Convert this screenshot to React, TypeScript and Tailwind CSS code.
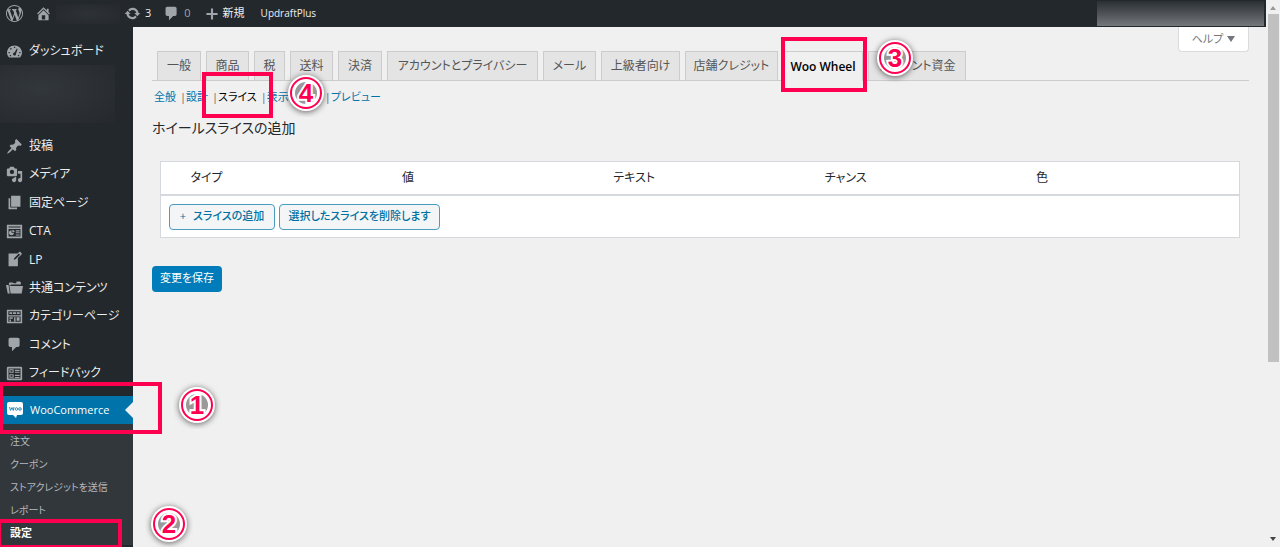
import React from "react";

const icons = {
  wordpress:
    "M20 10c0-5.51-4.49-10-10-10C4.48 0 0 4.49 0 10c0 5.52 4.48 10 10 10 5.51 0 10-4.48 10-10zM7.78 15.37L4.37 6.22c.55-.02 1.17-.08 1.17-.08.5-.06.44-1.13-.06-1.11 0 0-1.45.11-2.37.11-.18 0-.37 0-.58-.01C4.12 2.69 6.87 1.11 10 1.11c2.33 0 4.45.87 6.05 2.34-.68-.11-1.65.39-1.65 1.58 0 .74.45 1.36.9 2.1.35.61.55 1.36.55 2.46 0 1.49-1.4 5-1.4 5l-3.03-8.37c.54-.02.82-.17.82-.17.5-.05.44-1.25-.06-1.22 0 0-1.44.12-2.38.12-.87 0-2.33-.12-2.33-.12-.5-.03-.56 1.2-.06 1.22l.92.08 1.26 3.41zM17.41 10c.24-.64.74-1.87.43-4.25.7 1.29 1.05 2.71 1.05 4.25 0 3.29-1.73 6.24-4.4 7.78.97-2.59 1.94-5.2 2.92-7.78zM6.1 18.09C3.12 16.65 1.11 13.53 1.11 10c0-1.3.23-2.48.72-3.59C3.25 10.3 4.67 14.2 6.1 18.09zm4.03-6.63l2.58 6.98c-.86.29-1.76.45-2.71.45-.79 0-1.57-.11-2.29-.33.81-2.38 1.62-4.74 2.42-7.1z",
  home: "M16 8.5l1.53 1.53-1.06 1.06L10 4.6l-6.47 6.49-1.06-1.06L10 2.5l4 4v-2h2v4zm-6-2.46l6 5.99V18H4v-5.97zM12 17v-5H8v5h4z",
  update:
    "M10.2 3.28c3.53 0 6.43 2.61 6.92 6h2.08l-3.5 4-3.5-4h2.32c-.45-1.97-2.21-3.45-4.32-3.45-1.45 0-2.73.71-3.54 1.78L4.95 5.66C6.23 4.2 8.11 3.28 10.2 3.28zm-.4 13.44c-3.52 0-6.43-2.61-6.92-6H.8l3.5-4c1.17 1.33 2.33 2.67 3.5 4H5.48c.45 1.97 2.21 3.45 4.32 3.45 1.45 0 2.73-.71 3.54-1.78l1.71 1.95c-1.28 1.46-3.15 2.38-5.25 2.38z",
  comment:
    "M5 2h9c1.1 0 2 .9 2 2v7c0 1.1-.9 2-2 2h-2l-5 5v-5H5c-1.1 0-2-.9-2-2V4c0-1.1.9-2 2-2z",
  plus: "M18 8.5v3h-6.5V18h-3v-6.5H2v-3h6.5V2h3v6.5z",
  dashboard:
    "M3.8 17h12.4c1.7-1.4 2.6-3.4 2.6-5.5C18.8 6.8 14.9 3 10 3s-8.8 3.8-8.8 8.5c0 2.1.9 4.1 2.6 5.5zM9.3 4.3h1.5v1.5H9.3zM5 6h1.5v1.5H5zM3 10.5h1.5V12H3zM15.5 10.5H17V12h-1.5zM4.5 14H6v1.5H4.5zM14 14h1.5v1.5H14zM12.8 6.5l.9.5-1.9 5.5c.2 1.2-.6 2.3-1.8 2.3-1 0-1.8-.8-1.8-1.8s.8-1.7 1.8-1.8z",
  pin: "M10.44 3.02l1.82-1.82 6.36 6.35-1.83 1.82c-1.05-.68-2.48-.57-3.41.36l-.75.75c-.92.93-1.04 2.35-.35 3.41l-1.83 1.82-2.41-2.41-2.8 2.79c-.42.42-3.38 2.71-3.8 2.29s1.86-3.39 2.28-3.81l2.79-2.79L4.1 9.36l1.83-1.82c1.05.69 2.48.57 3.4-.36l.75-.75c.93-.92 1.05-2.35.36-3.41z",
  media:
    "M13 11V4c0-.55-.45-1-1-1h-1.67L9 1H5L3.67 3H2c-.55 0-1 .45-1 1v7c0 .55.45 1 1 1h10c.55 0 1-.45 1-1zM7 4.5c1.38 0 2.5 1.12 2.5 2.5S8.38 9.5 7 9.5 4.5 8.38 4.5 7 5.62 4.5 7 4.5zM14 6h5v10.5c0 1.38-1.12 2.5-2.5 2.5S14 17.88 14 16.5s1.12-2.5 2.5-2.5c.17 0 .34.02.5.05V9h-3V6zm-4 8.05V13h2v3.5c0 1.38-1.12 2.5-2.5 2.5S7 17.88 7 16.5 8.12 14 9.5 14c.17 0 .34.02.5.05z",
  pages: "M6 15V2h11v13H6zm-1 1h8v2H3V5h2v11z",
  card: "M1 2h18v16H1zM3 4v1.2h14V4zM3 7v9h14V7zM6.5 8.5v3h3c0 1.7-1.3 3-3 3s-3-1.3-3-3 1.3-3 3-3zM7.5 7.8c1.5 0 2.7 1.2 2.7 2.7H7.5zM11.5 8.5H16V10h-4.5zM11.5 11H16v1.2h-4.5zM11.5 13.5H16v1.2h-4.5z",
  write:
    "M16.89 1.2l1.41 1.41c.39.39.39 1.02 0 1.41L14 8.33V18H3V3h10.67l1.8-1.8c.4-.39 1.03-.4 1.42 0zm-5.66 8.48l5.37-5.36-1.42-1.42-5.36 5.37-.71 2.12z",
  folder:
    "M0 7h3l1.5 10H2zM4 7.5L3.2 5.5 4 4h4l1 1h3l.5-2h4l1 1v2.5H5.5V7.5zM4 8.2h16L18.5 17H5.5z",
  layout:
    "M1 2h18v16H1zM2.8 3.8v4.7h14.4V3.8zM2.8 10v6.2h14.4V10zM4 5h3.3v2H4zM8.3 5h3.4v2H8.3zM12.7 5H16v2h-3.3zM4 11h4v1.5H4zM4 13.5h1.8V16H4zM9.5 11h1.7v5H9.5zM12.5 11H16v4h-3.5z",
  feedback:
    "M2 2h16l1 1v14l-1 1H2l-1-1V3zM3 4v12h14V4zM4 5h5v4H4zM5.2 6.2v1.6h2.6V6.2zM4 11h5v4H4zM5.2 12.2v1.6h2.6v-1.6zM10.5 5.5H16V7h-5.5zM10.5 8H16v1.2h-5.5zM10.5 11.5H16V13h-5.5zM10.5 14H16v1.2h-5.5z",
};

type IconName = keyof typeof icons;

const Icon = ({ name, className }: { name: IconName; className: string }) => (
  <svg viewBox="0 0 20 20" fill="currentColor" fillRule="evenodd" className={className} aria-hidden="true">
    <path d={icons[name]} />
  </svg>
);

const menu: { icon: IconName; label: string }[] = [
  { icon: "pin", label: "投稿" },
  { icon: "media", label: "メディア" },
  { icon: "pages", label: "固定ページ" },
  { icon: "card", label: "CTA" },
  { icon: "write", label: "LP" },
  { icon: "folder", label: "共通コンテンツ" },
  { icon: "layout", label: "カテゴリーページ" },
  { icon: "comment", label: "コメント" },
  { icon: "feedback", label: "フィードバック" },
];

const submenu = ["注文", "クーポン", "ストアクレジットを送信", "レポート", "設定"];

const tabs = [
  { label: "一般", width: "w-11" },
  { label: "商品", width: "w-[43px]" },
  { label: "税", width: "w-[31px]" },
  { label: "送料", width: "w-[43px]" },
  { label: "決済", width: "w-11" },
  { label: "アカウントとプライバシー", width: "w-[151px]" },
  { label: "メール", width: "w-[53px]" },
  { label: "上級者向け", width: "w-[79px]" },
  { label: "店舗クレジット", width: "w-[93px]" },
  { label: "Woo Wheel", width: "w-20", active: true },
  { label: "アカウント資金", width: "w-[98px]" },
];

const columns = ["タイプ", "値", "テキスト", "チャンス", "色"];

const MenuItem = ({ icon, label }: { icon: IconName; label: string }) => (
  <li>
    <a href="#" className="flex h-7 items-center gap-1.5 pl-1.5 text-[#eee]">
      <Icon name={icon} className="size-[17px] shrink-0 text-[#a0a5aa]" />
      {label}
    </a>
  </li>
);

// numbered marker of the walkthrough
const Marker = ({ n, className }: { n: number; className: string }) => (
  <svg viewBox="0 0 48 48" className={`absolute size-12 ${className}`}>
    <circle cx="24" cy="24" r="18" fill="#fff" className="drop-shadow-[0_1px_3px_rgba(0,0,0,0.6)]" />
    <circle cx="24" cy="24" r="11" fill="#999" />
    <circle cx="24" cy="24" r="15" fill="none" stroke="#ff0050" strokeWidth="2" />
    <text
      x="24"
      y="33"
      textAnchor="middle"
      fontSize="26"
      fontWeight="700"
      fill="#ff0050"
      stroke="#fff"
      strokeWidth="4"
      paintOrder="stroke"
      className="font-['Liberation_Sans',sans-serif]"
    >
      {n}
    </text>
  </svg>
);

const AdminBar = () => (
  <header className="flex h-[27px] shrink-0 items-center bg-[#23282d] pl-1.5 text-[11px] text-[#eee]">
    <a href="#" aria-label="WordPress">
      <Icon name="wordpress" className="size-[17px] text-[#a0a5aa]" />
    </a>
    <a href="#" className="ml-3 flex items-center gap-1" aria-label="サイト">
      <Icon name="home" className="size-[17px] text-[#a0a5aa]" />
      <span className="h-5 w-16 bg-radial from-[#2d3237] to-[#25292e]"></span>
    </a>
    <a href="#" className="ml-1 flex items-center gap-1">
      <Icon name="update" className="size-[17px] text-[#a0a5aa]" />3
    </a>
    <a href="#" className="ml-3 flex items-center gap-1 text-[#a0a5aa]">
      <Icon name="comment" className="size-[17px]" />0
    </a>
    <a href="#" className="ml-3.5 flex items-center gap-1">
      <Icon name="plus" className="size-[14px] text-[#a0a5aa]" />
      新規
    </a>
    <a href="#" className="ml-4 text-[10px] font-medium">UpdraftPlus</a>
    <span className="ml-auto mr-0.5 h-[25px] w-[167px] bg-linear-to-b from-[#2b3035] to-[#75787b]"></span>
  </header>
);

const Sidebar = () => (
  <nav className="w-[133px] shrink-0 bg-[#23282d] pt-2.5">
    <ul>
      <MenuItem icon="dashboard" label="ダッシュボード" />
    </ul>
    <div className="mb-[9px] h-[58px] w-[115px] bg-radial-[at_35%_40%] from-[#32373c] to-[#25292e]"></div>
    <ul className="flex h-[255px] flex-col justify-between">
      {menu.map((item) => (
        <MenuItem key={item.label} icon={item.icon} label={item.label} />
      ))}
    </ul>
    <a
      href="#"
      className="relative mt-[9px] flex h-7 items-center gap-1.5 bg-[#0073aa] pl-1.5 text-[11px] font-medium text-white"
    >
      <svg viewBox="0 0 18 18" className="size-[18px] shrink-0" aria-hidden="true">
        <path d="M3 1h12q2 0 2 2v9q0 2-2 2h-4l-1 3-3-3H3q-2 0-2-2V3q0-2 2-2z" fill="#fff" />
        <path d="M3.500 6l1 3.500L6 6.500l1.300 3L8 6" fill="none" stroke="#0073aa" strokeWidth=".8" />
        <circle cx="10.500" cy="8" r="1.300" fill="none" stroke="#0073aa" strokeWidth=".8" />
        <circle cx="14" cy="8" r="1.300" fill="none" stroke="#0073aa" strokeWidth=".8" />
      </svg>
      WooCommerce
      <span className="absolute right-0 top-1.5 border-y-8 border-r-8 border-y-transparent border-r-[#f0f0f0]"></span>
    </a>
    <ul className="bg-[#32373c] pt-1.5 text-[10px]">
      {submenu.map((label) => (
        <li key={label}>
          <a
            href="#"
            className={`flex h-[23px] items-center whitespace-nowrap pl-2.5 ${
              label === "設定" ? "text-[11px] font-semibold text-white" : "text-[#b4b9be]"
            }`}
          >
            {label}
          </a>
        </li>
      ))}
    </ul>
  </nav>
);

const SliceTable = () => (
  <table className="w-full table-fixed border border-[#d5d9dd] bg-white text-left text-xs">
    <thead>
      <tr className="h-[33px] border-b-2 border-[#d5d9dd]">
        <th className="w-[22px]"></th>
        {columns.map((c) => (
          <th key={c} className="pl-2 font-normal text-[#23282d]">{c}</th>
        ))}
      </tr>
    </thead>
    <tbody>
      <tr>
        <td colSpan={6} className="px-2 pb-[7px] pt-2">
          <div className="flex gap-1 text-[11px] font-medium text-[#0071a1]">
            <button className="h-[26px] w-[106px] rounded-sm border border-[#4a9cc0] bg-[#f3f5f6]">
              <span className="mr-1">+</span> スライスの追加
            </button>
            <button className="h-[26px] w-[161px] rounded-sm border border-[#4a9cc0] bg-[#f3f5f6]">
              選択したスライスを削除します
            </button>
          </div>
        </td>
      </tr>
    </tbody>
  </table>
);

const Settings = () => (
  <main className="min-w-0 flex-1 pl-[19px] pr-[17px]">
    <div className="flex justify-end">
      <button className="flex h-[25px] w-[71px] items-center justify-center gap-1 rounded-b border border-t-0 border-[#d8dadc] bg-white text-[11px] text-[#72777c]">
        ヘルプ <span className="border-x-4 border-t-[6px] border-x-transparent border-t-[#72777c]"></span>
      </button>
    </div>
    <nav className="-mt-px flex gap-[5px] border-b border-[#ccc] pl-[5px] text-xs">
      {tabs.map((tab) => (
        <a
          key={tab.label}
          href="#"
          className={`flex shrink-0 items-center justify-center whitespace-nowrap border border-b-0 border-[#ccc] ${tab.width} ${
            tab.active ? "-mb-px h-[30px] bg-[#f0f0f0] font-semibold text-black" : "h-[29px] bg-[#e4e4e4] text-[#555]"
          }`}
        >
          {tab.label}
        </a>
      ))}
    </nav>
    <ul className="mt-2 flex h-4 items-center gap-1 pl-0.5 text-[11px] text-[#0073aa]">
      <li><a href="#">全般</a></li>
      <li><span className="text-[#666]">|</span><a href="#">設計</a></li>
      <li><span className="text-[#666]">|</span><a href="#" className="text-black">スライス</a></li>
      <li><span className="text-[#666]">|</span><a href="#">表示</a></li>
      <li><span className="text-[#666]">|</span><a href="#">通知</a></li>
      <li><span className="text-[#666]">|</span><a href="#">プレビュー</a></li>
    </ul>
    <h2 className="mb-[23px] mt-[13px] text-sm leading-5 text-[#23282d]">ホイールスライスの追加</h2>
    <div className="pl-2 pr-[9px]">
      <SliceTable />
    </div>
    <button className="mt-7 h-[26px] w-[70px] rounded-sm bg-[#007cba] text-[11px] text-white">変更を保存</button>
  </main>
);

const Scrollbar = () => (
  <div className="flex w-3.5 shrink-0 flex-col items-center bg-[#f0f0f0]">
    <span className="mt-1.5 border-x-[3px] border-b-4 border-x-transparent border-b-[#999]"></span>
    <span className="mt-1 h-[348px] w-[11px] bg-[#c1c1c1]"></span>
    <span className="mb-1.5 mt-auto border-x-[3px] border-t-4 border-x-transparent border-t-[#444]"></span>
  </div>
);

const App = () => {
  return (
    <div className="relative flex h-screen overflow-hidden bg-[#f0f0f0] font-['Open_Sans','Noto_Sans_CJK_JP',sans-serif] [font-feature-settings:'palt']">
      <div className="flex min-w-0 flex-1 flex-col">
        <AdminBar />
        <div className="flex flex-1 text-xs">
          <Sidebar />
          <Settings />
        </div>
      </div>
      <Scrollbar />

      {/* highlights */}
      <div className="absolute -left-px top-[382px] h-[52px] w-[163px] border-4 border-[#ff0050]"></div>
      <div className="absolute -left-[3px] top-[519px] h-[30px] w-[125px] border-4 border-[#ff0050]"></div>
      <div className="absolute left-[781px] top-[37px] h-[55px] w-[86px] border-4 border-[#ff0050]"></div>
      <div className="absolute left-[202px] top-[72px] h-[46px] w-[71px] border-4 border-[#ff0050]"></div>
      <Marker n={1} className="left-[173px] top-[381px]" />
      <Marker n={2} className="left-[145px] top-[500px]" />
      <Marker n={3} className="left-[871px] top-[34px]" />
      <Marker n={4} className="left-[282px] top-[69px]" />
    </div>
  );
};

export default App;
